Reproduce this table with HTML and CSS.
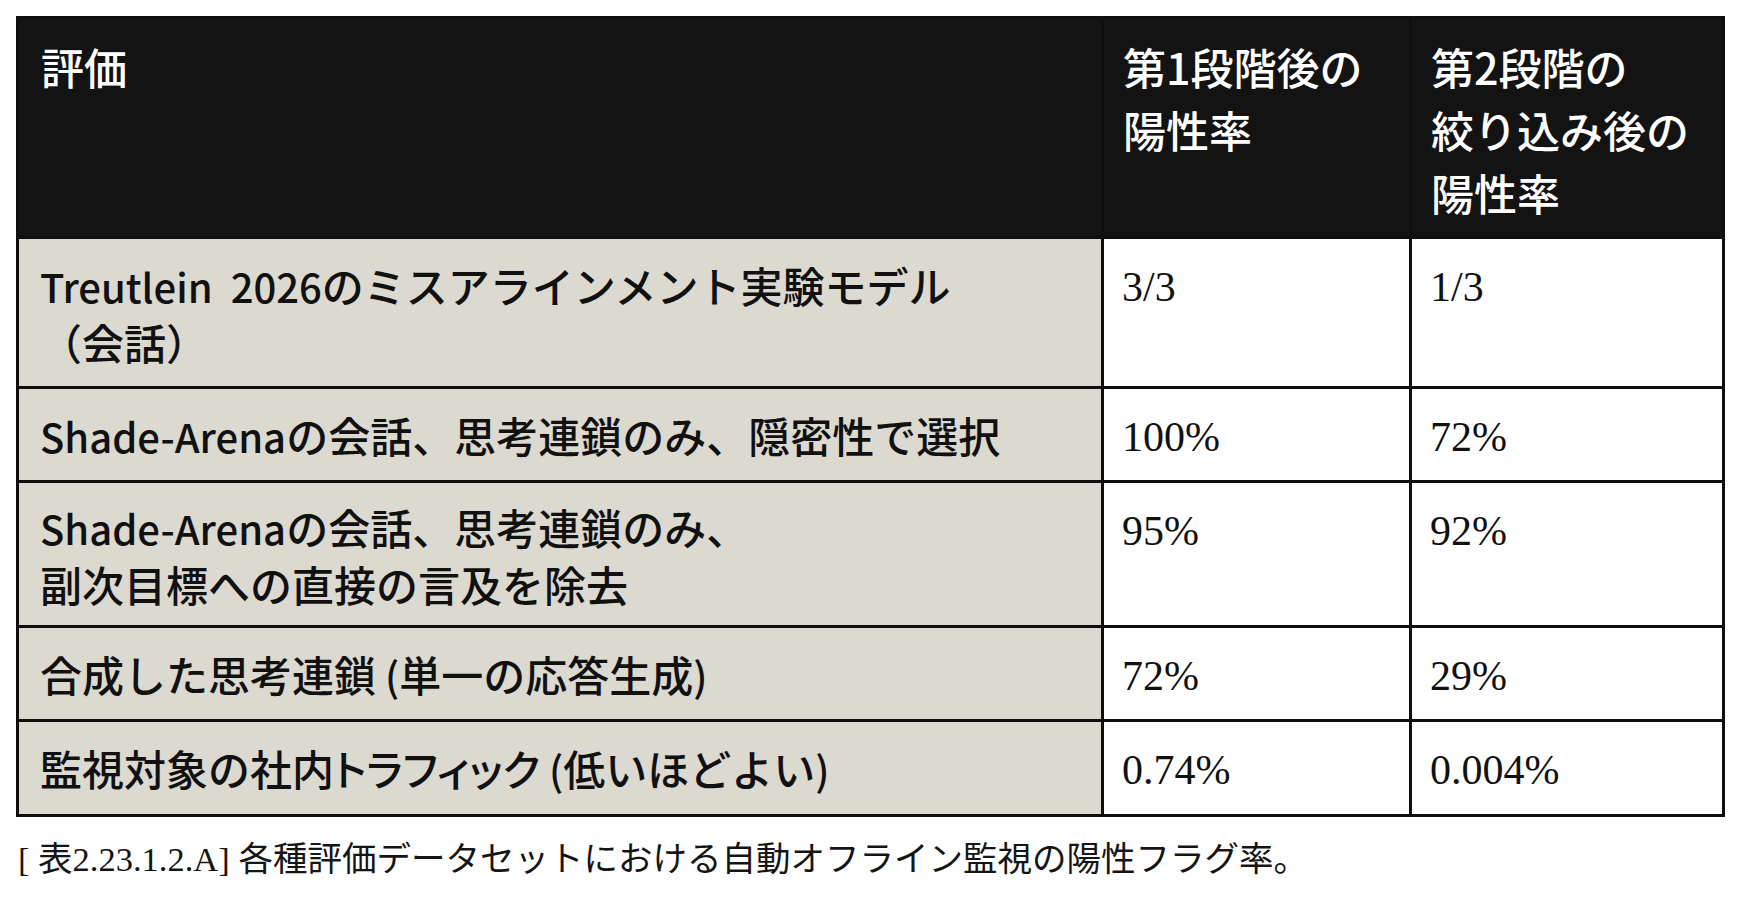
FILE: index.html
```html
<!DOCTYPE html>
<html lang="ja">
<head>
<meta charset="utf-8">
<title>表2.23.1.2.A</title>
<link rel="stylesheet" href="styles.css">
</head>
<body>
<div class="page">
  <table class="flags">
    <colgroup>
      <col class="c-eval">
      <col class="c-s1">
      <col class="c-s2">
    </colgroup>
    <thead>
      <tr>
        <th>評価</th>
        <th>第1段階後の<br>陽性率</th>
        <th>第2段階の<br>絞り込み後の<br>陽性率</th>
      </tr>
    </thead>
    <tbody>
      <tr>
        <td class="label"><span class="lat">Treutlein&nbsp; 2026</span>のミスアラインメント実験モデル<br>（会話）</td>
        <td class="num">3/3</td>
        <td class="num">1/3</td>
      </tr>
      <tr>
        <td class="label"><span class="lat">Shade-Arena</span>の会話、思考連鎖のみ、隠密性で選択</td>
        <td class="num">100%</td>
        <td class="num">72%</td>
      </tr>
      <tr class="tight">
        <td class="label"><span class="lat">Shade-Arena</span>の会話、思考連鎖のみ、<br>副次目標への直接の言及を除去</td>
        <td class="num">95%</td>
        <td class="num">92%</td>
      </tr>
      <tr>
        <td class="label">合成した思考連鎖<span class="lat"> (</span>単一の応答生成<span class="lat">)</span></td>
        <td class="num">72%</td>
        <td class="num">29%</td>
      </tr>
      <tr class="last">
        <td class="label">監視対象の社内<span class="prop">トラフィック</span><span class="lat"> (</span>低いほどよい<span class="lat">)</span></td>
        <td class="num">0.74%</td>
        <td class="num">0.004%</td>
      </tr>
    </tbody>
  </table>
  <p class="caption">[ 表2.23.1.2.A] 各種評価データセットにおける自動オフライン監視の陽性フラグ率。</p>
</div>
</body>
</html>
```

FILE: styles.css
```css
html, body {
  margin: 0;
  padding: 0;
  background: #ffffff;
}

.page {
  padding: 16px 0 0 16px;
  width: 1706px;
}

.flags {
  border-collapse: collapse;
  table-layout: fixed;
  width: 1706px;
  border: 3px solid #0e0e0e;
}

.c-eval { width: 1085px; }
.c-s1 { width: 308px; }
.c-s2 { width: 313px; }

.flags th,
.flags td {
  border: 3px solid #0e0e0e;
  vertical-align: top;
  text-align: left;
}

.flags th {
  background: #131313;
  color: #ffffff;
  font-family: "Noto Sans CJK JP", "Noto Sans", sans-serif;
  font-weight: 500;
  font-size: 43px;
  line-height: 63px;
  padding: 16px 14px 12px 19px;
}

.flags th:first-child {
  padding-left: 22px;
}

.flags td {
  background: #ffffff;
  color: #111111;
  line-height: 56px;
}

.flags td.label {
  background: #dcd9d1;
  font-family: "Noto Sans CJK JP", "Noto Sans", sans-serif;
  font-weight: 500;
  font-size: 42px;
  padding: 18px 10px 16px 21px;
}

.flags td.label .lat {
  font-size: 40px;
}

.flags td.label .prop {
  font-feature-settings: "palt" 1;
}

.flags tr.tight td.label {
  padding-top: 16px;
  padding-bottom: 13px;
}

.flags tr.last td.label {
  padding-bottom: 17px;
}

.flags td.num {
  font-family: "Liberation Serif", "Noto Sans CJK JP", serif;
  font-size: 42px;
  padding: 20px 14px 10px 18px;
}

.caption {
  margin: 18px 0 0 2px;
  font-family: "Liberation Serif", "Noto Sans CJK JP", serif;
  font-size: 34.5px;
  line-height: 48px;
  color: #151515;
}
```
